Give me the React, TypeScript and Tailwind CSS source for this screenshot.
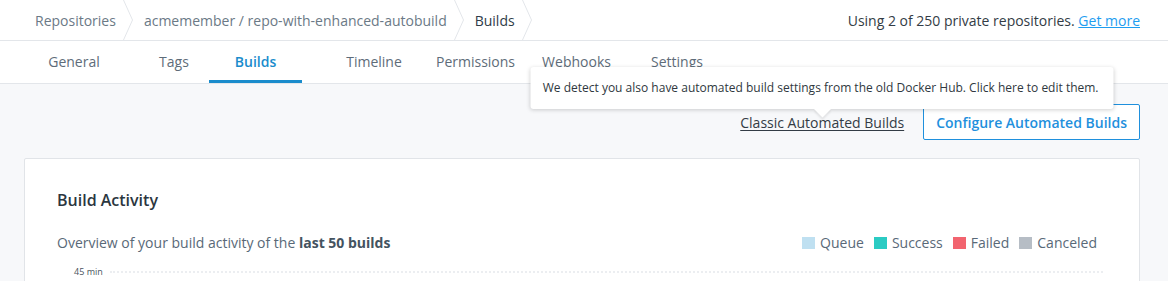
import React from "react";

const crumbs = ["Repositories", "acmemember / repo-with-enhanced-autobuild", "Builds"];

const tabs = [
  { label: "General", w: "w-[108px]", ml: "ml-[20px]" },
  { label: "Tags", w: "w-[86px]", ml: "ml-[3px]" },
  { label: "Builds", w: "w-[93px]", ml: "ml-[-8px]", active: true },
  { label: "Timeline", w: "w-[112px]", ml: "ml-[16px]" },
  { label: "Permissions", w: "w-[107px]", ml: "ml-[-8px]" },
  { label: "Webhooks", w: "w-[97px]", ml: "ml-[-1px]" },
  { label: "Settings", w: "w-[108px]", ml: "ml-[-2px]" },
];

const legend = [
  { label: "Queue", color: "bg-[#bfe0f1]" },
  { label: "Success", color: "bg-[#2bcbc3]" },
  { label: "Failed", color: "bg-[#f2646f]" },
  { label: "Canceled", color: "bg-[#b6bdc5]" },
];

function Chevron() {
  return (
    <svg width="10" height="40" viewBox="0 0 10 40" className="shrink-0">
      <path d="M0.5 0 L9.5 20 L0.5 40" fill="none" stroke="#e3e6ea" strokeWidth="1" />
    </svg>
  );
}

export default function App() {
  return (
    <div className="w-[1168px] h-[281px] overflow-hidden bg-[#f7f8fa] font-['Open_Sans',sans-serif]">
      {/* breadcrumb */}
      <div className="h-[41px] bg-white border-b border-[#e3e6ea] flex items-center justify-between pr-[28px]">
        <div className="flex items-center pl-[35px] text-[14px]">
          {crumbs.map((c, i) => (
            <div key={c} className="flex items-center">
              <span className={i === crumbs.length - 1 ? "text-[#2f3c49]" : "text-[#6b7986]"}>{c}</span>
              <span className="ml-[7px] mr-[11px]">
                <Chevron />
              </span>
            </div>
          ))}
        </div>
        <div className="text-[14px] text-[#333c45]">
          Using 2 of 250 private repositories.{" "}
          <span className="text-[#1e9df0] underline">Get more</span>
        </div>
      </div>

      {/* tabs */}
      <div className="h-[43px] bg-white border-b border-[#e3e6ea] flex items-stretch">
        {tabs.map((t) => (
          <div
            key={t.label}
            className={`${t.w} ${t.ml} flex items-center justify-center text-[14px] border-b-[3px] ${
              t.active ? "border-[#1a8ccc] text-[#1a8ccc] font-semibold" : "border-transparent text-[#5e6c79]"
            }`}
          >
            <span className="-mb-[1px]">{t.label}</span>
          </div>
        ))}
      </div>

      {/* content */}
      <div className="pl-[24px] pr-[28px]">
        <div className="flex justify-end items-center mt-[20px] gap-[19px]">
          <div className="relative">
            <span className="text-[14px] text-[#333c45] underline underline-offset-2">Classic Automated Builds</span>
            <div className="absolute bottom-[25px] left-1/2 -translate-x-1/2 w-[583px] h-[42px] bg-white rounded-[3px] shadow-[0_1px_4px_rgba(0,0,0,0.18)] flex items-center px-[12px] text-[12px] text-[#2f3840] whitespace-nowrap">
              We detect you also have automated build settings from the old Docker Hub. Click here to edit them.
              <div className="absolute left-1/2 -bottom-[6px] -translate-x-1/2 w-[12px] h-[12px] rotate-45 bg-white shadow-[2px_2px_2px_rgba(0,0,0,0.08)]" />
            </div>
          </div>
          <div className="h-[36px] px-[12px] border border-[#1f90dd] rounded-[2px] bg-white flex items-center text-[14px] font-semibold text-[#1f90dd]">
            Configure Automated Builds
          </div>
        </div>

        <div className="mt-[18px] bg-white border border-[#e1e4e8] rounded-[2px] pl-[32px] pr-[36px] pt-[29px] h-[140px]">
          <div className="text-[16px] font-semibold text-[#2b3640]">Build Activity</div>
          <div className="mt-[20px] flex items-center justify-between pr-[6px]">
            <div className="text-[14px] text-[#596978]">
              Overview of your build activity of the <span className="font-bold text-[#44535f]">last 50 builds</span>
            </div>
            <div className="flex items-center gap-[10px] text-[14px] text-[#596978]">
              {legend.map((l) => (
                <div key={l.label} className="flex items-center gap-[5px]">
                  <span className={`w-[13px] h-[12px] ${l.color}`} />
                  <span>{l.label}</span>
                </div>
              ))}
            </div>
          </div>
          <div className="mt-[12px] flex items-center pl-[17px]">
            <span className="text-[9px] text-[#4a5560] w-[36px]">45 min</span>
            <div className="flex-1 border-t-2 border-dotted border-[#eceef1]" />
          </div>
        </div>
      </div>
    </div>
  );
}
